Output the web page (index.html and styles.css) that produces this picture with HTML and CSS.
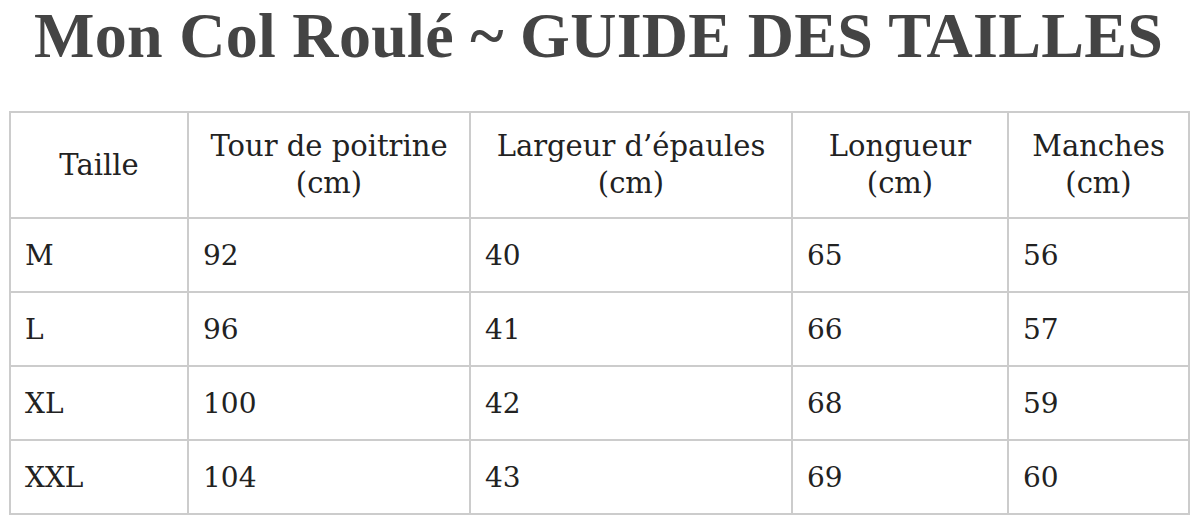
FILE: index.html
```html
<!DOCTYPE html>
<html lang="fr">
<head>
<meta charset="utf-8">
<title>Mon Col Roulé ~ Guide des tailles</title>
<link rel="stylesheet" href="styles.css">
</head>
<body>
<h1 class="title">Mon Col Roulé ~ GUIDE DES TAILLES</h1>
<table class="sizes">
  <colgroup>
    <col class="c1"><col class="c2"><col class="c3"><col class="c4"><col class="c5">
  </colgroup>
  <thead>
    <tr>
      <th>Taille</th>
      <th>Tour de poitrine<br>(cm)</th>
      <th>Largeur d’épaules<br>(cm)</th>
      <th>Longueur<br>(cm)</th>
      <th>Manches<br>(cm)</th>
    </tr>
  </thead>
  <tbody>
    <tr><td>M</td><td>92</td><td>40</td><td>65</td><td>56</td></tr>
    <tr><td>L</td><td>96</td><td>41</td><td>66</td><td>57</td></tr>
    <tr><td>XL</td><td>100</td><td>42</td><td>68</td><td>59</td></tr>
    <tr><td>XXL</td><td>104</td><td>43</td><td>69</td><td>60</td></tr>
  </tbody>
</table>
</body>
</html>
```
FILE: styles.css
```css
html, body {
  margin: 0;
  padding: 0;
  background: #fff;
}
body {
  padding: 0 8px 0 9px;
  font-family: "DejaVu Serif", "Liberation Serif", serif;
  color: #222;
}
.title {
  margin: 0;
  padding-top: 0;
  height: 111px;
  box-sizing: border-box;
  text-align: center;
  font-family: "Liberation Serif", "DejaVu Serif", serif;
  font-weight: bold;
  font-size: 64px;
  line-height: 72px;
  letter-spacing: 0.3px;
  color: #444;
}
.sizes {
  border-collapse: collapse;
  width: 1179px;
  table-layout: fixed;
  font-size: 28px;
}
.c1 { width: 178px; }
.c2 { width: 282px; }
.c3 { width: 322px; }
.c4 { width: 216px; }
.c5 { width: 181px; }
.sizes th, .sizes td {
  border: 2px solid #ccc;
  color: #222;
}
.sizes th {
  font-weight: normal;
  font-size: 29px;
  text-align: center;
  height: 104px;
  padding: 0 4px;
  line-height: 37px;
  vertical-align: middle;
}
.sizes td {
  height: 72px;
  padding: 0 14px;
  text-align: left;
  vertical-align: middle;
}
```
